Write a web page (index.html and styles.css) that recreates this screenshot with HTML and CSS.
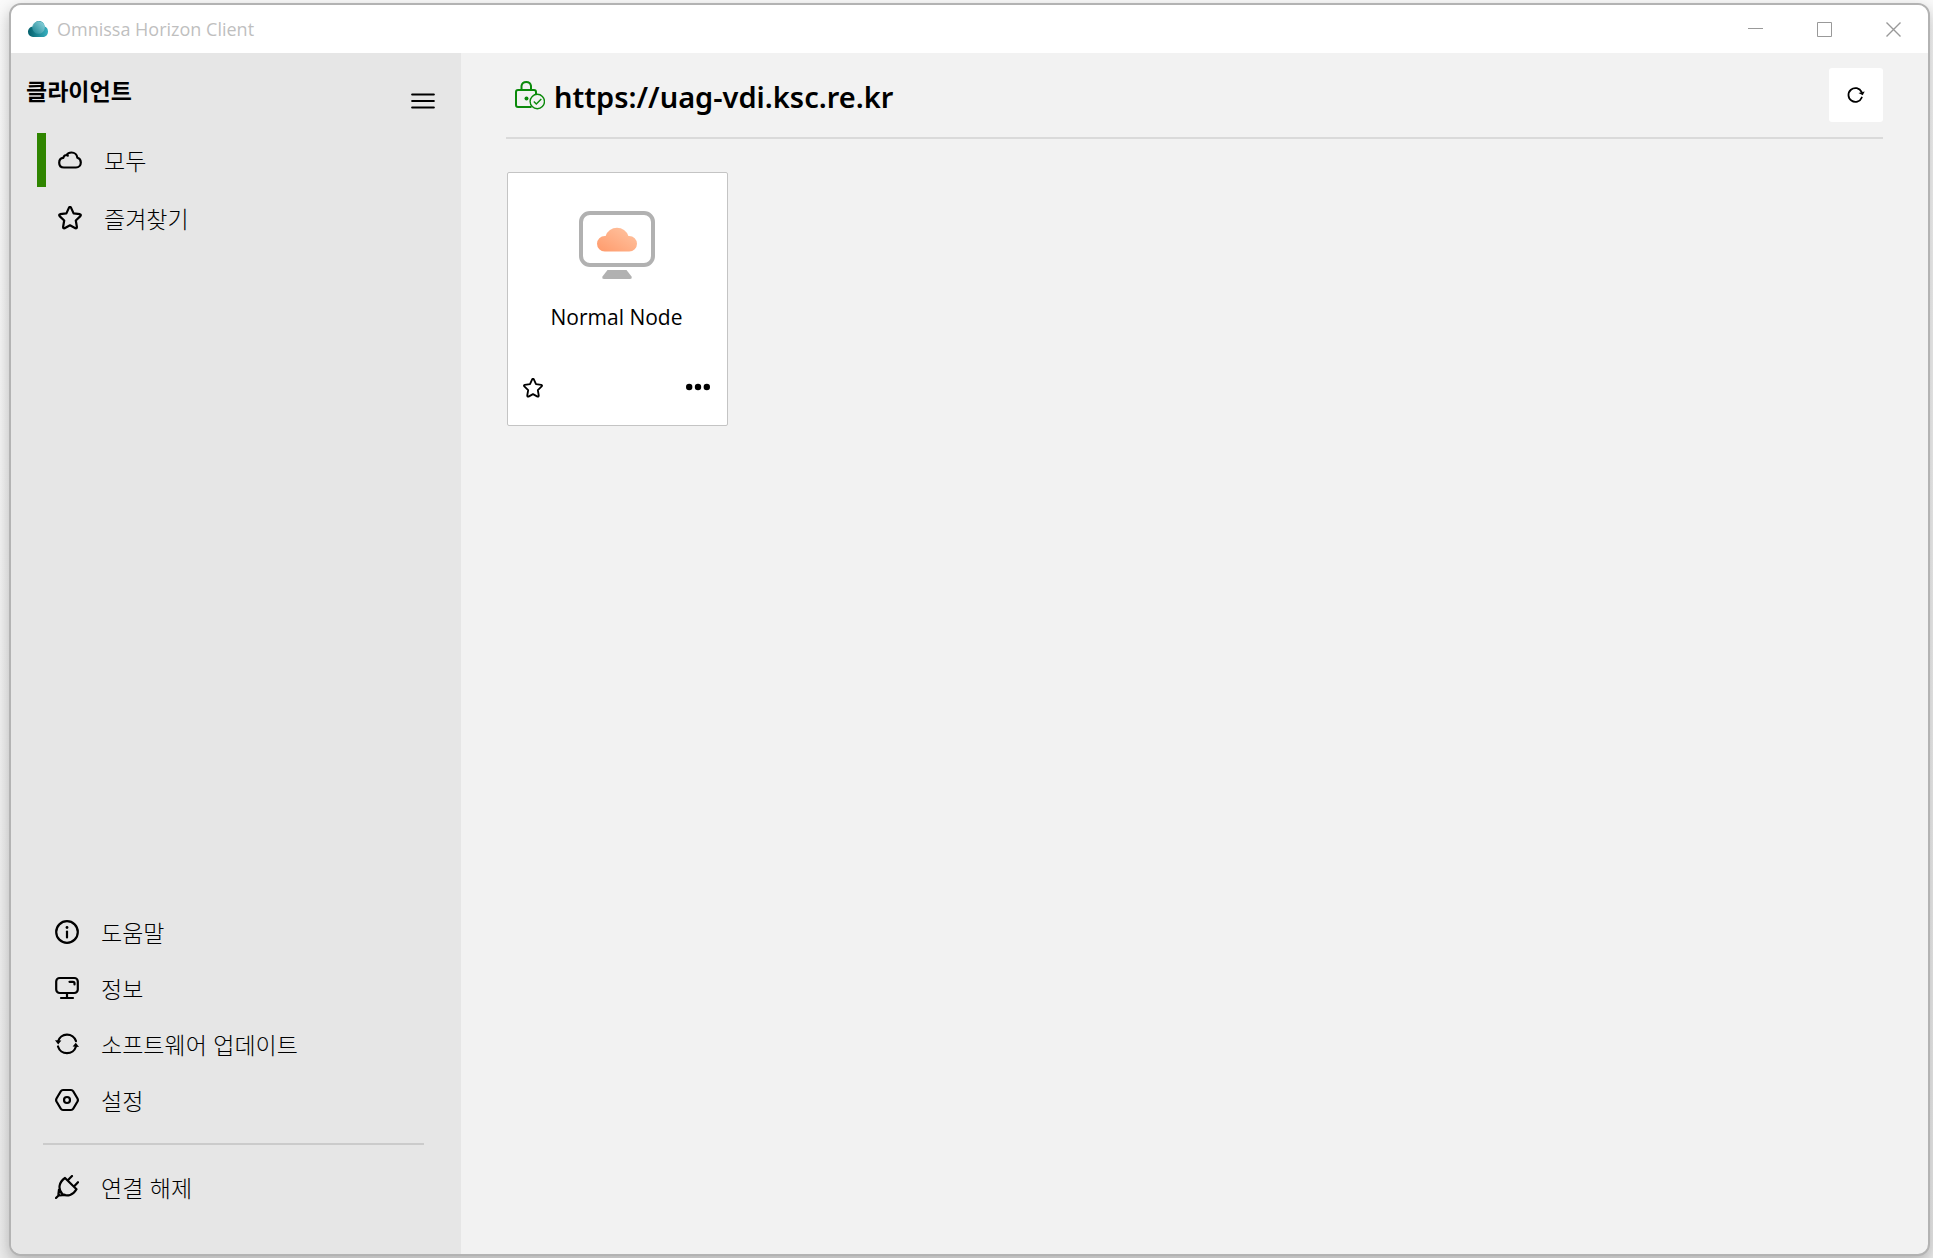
FILE: index.html
```html
<!DOCTYPE html>
<html lang="ko">
<head>
<meta charset="utf-8">
<title>Omnissa Horizon Client</title>
<link rel="stylesheet" href="styles.css">
</head>
<body>
<div class="window">
  <header class="titlebar">
    <svg class="app-logo" width="20" height="16" viewBox="0 0 20 16" aria-hidden="true">
      <defs>
        <linearGradient id="logo-base" x1="0" y1="0" x2="1" y2="0"><stop offset="0" stop-color="#04606c"/><stop offset="1" stop-color="#38b0c0"/></linearGradient>
        <linearGradient id="logo-top" x1="1" y1="0" x2="0" y2="1"><stop offset="0" stop-color="#a6e2ea"/><stop offset="1" stop-color="#1c8795"/></linearGradient>
      </defs>
      <path fill="url(#logo-base)" d="M5 16a5 5 0 0 1-5-5c0-3 2-5.300 5-5.600C6 2 8 0 11 0c3.500 0 5.500 2.500 5.700 5.500C18.800 6.200 20 8 20 10.500c0 3-2 5.500-5 5.500z"/>
      <circle cx="10.500" cy="6.500" r="6.300" fill="url(#logo-top)" opacity=".85"/>
    </svg>
    <span class="app-name">Omnissa Horizon Client</span>
    <div class="window-controls">
      <button type="button" aria-label="최소화"><svg width="15" height="15" viewBox="0 0 15 15"><path d="M0 6.500h15"/></svg></button>
      <button type="button" aria-label="최대화"><svg width="15" height="15" viewBox="0 0 15 15"><path d="M.5.500h14v14H.5z"/></svg></button>
      <button type="button" aria-label="닫기"><svg width="15" height="15" viewBox="0 0 15 15"><path stroke-width="1.400" d="M.5.500l14 14M14.500.500l-14 14"/></svg></button>
    </div>
  </header>
  <div class="content">
    <aside class="sidebar">
      <div class="sidebar-head">
        <h2>클라이언트</h2>
        <button type="button" class="menu-button" aria-label="메뉴">
          <svg class="icon" width="24" height="24" viewBox="0 0 24 24"><path d="M1.200 5.500h21.600M1.200 12h21.600M1.200 18.500h21.600"/></svg>
        </button>
      </div>
      <nav class="nav-top">
        <a href="#all" class="nav-item active">
          <svg class="icon" width="24" height="24" viewBox="0 0 24 24"><path d="M6 19.500c-3 0-4.800-2-4.800-4.800 0-2.600 1.700-4.600 4.100-4.800.3-1.700 1.700-2.900 3.300-2.900C9.600 5.300 11.500 4.500 13.500 4.500c3.200 0 5.600 2.300 5.900 5.300 2.100.6 3.400 2.500 3.400 4.700 0 2.900-2 5-4.800 5zM8.600 7c.5.100.8.300 1.200.6"/></svg>
          <span>모두</span>
        </a>
        <a href="#favorites" class="nav-item">
          <svg class="icon" width="24" height="24" viewBox="0 0 24 24"><path d="M11 1.600q1-1.300 2 0l2.600 5.800 6.300.8q1.600.500.5 1.900l-4.600 4.400 1.100 6.500q0 1.700-1.500 1.300L12 19.300l-5.400 3q-1.500.400-1.500-1.300l1.100-6.500-4.600-4.400q-1.100-1.400.5-1.900l6.300-.8z"/></svg>
          <span>즐겨찾기</span>
        </a>
      </nav>
      <nav class="nav-bottom">
        <a href="#help" class="nav-item">
          <svg class="icon" width="24" height="24" viewBox="0 0 24 24"><circle cx="12" cy="12" r="10.800"/><path d="M12 11.500v6"/><circle class="dot" cx="12" cy="7.500" r="1.400"/></svg>
          <span>도움말</span>
        </a>
        <a href="#about" class="nav-item">
          <svg class="icon" width="24" height="24" viewBox="0 0 24 24"><rect x="1.200" y="2" width="21.600" height="15" rx="3.500"/><path d="M12 17v4.500M6 22h12M14.500 5.800h3.500q1.500 0 1.500 1.500V8.500"/></svg>
          <span>정보</span>
        </a>
        <a href="#update" class="nav-item">
          <svg class="icon" width="24" height="24" viewBox="0 0 24 24"><path d="M3 9.500A9.400 9.400 0 0 1 21 9.200M21 14.500A9.400 9.400 0 0 1 3 14.500"/><path class="dot" d="M0 8.200l6.400.4-3.200 3.800zM24 15l-6.400-.4 3.200-3.800z"/></svg>
          <span>소프트웨어 업데이트</span>
        </a>
        <a href="#settings" class="nav-item">
          <svg class="icon" width="24" height="24" viewBox="0 0 24 24"><path d="M8 2h8q1.500 0 2.200 1.200l4.300 7.300q.8 1.500 0 3l-4.300 7.300Q17.500 22 16 22H8q-1.500 0-2.200-1.200L1.500 13.500q-.8-1.500 0-3L5.800 3.200Q6.500 2 8 2z"/><circle cx="12" cy="12" r="3"/></svg>
          <span>설정</span>
        </a>
        <hr>
        <a href="#disconnect" class="nav-item">
          <svg class="icon" width="24" height="24" viewBox="0 0 24 24"><path d="M10 3L21.500 14.200C18 20 12.500 22 7.500 19.200 2.500 14 4 7 10 3zM12.800 5.200L17 1M19.200 11.200L23 7.200M1 23l3.300-3.300M4 14.500l-.6 5q.1 1 1.200 1l5.400-.7M5.500 17l2 2.200"/></svg>
          <span>연결 해제</span>
        </a>
      </nav>
    </aside>
    <main class="main">
      <div class="server-bar">
        <svg class="lock" width="30" height="30" viewBox="0 0 30 30" aria-hidden="true">
          <path d="M16.500 27H3q-2 0-2-2V12q0-2 2-2h16q2 0 2 2v2M6.500 10V6a4.800 4.800 0 0 1 9.500 0v4"/>
          <circle class="lock-dot" cx="11.500" cy="18.500" r="2"/>
          <circle class="thin" cx="22.300" cy="21.500" r="7.200"/><path class="thin" d="M18.800 21.500l2.500 2.500 5-5"/>
        </svg>
        <h1>https://uag-vdi.ksc.re.kr</h1>
        <button type="button" class="refresh" aria-label="새로 고침">
          <svg class="icon" width="18" height="18" viewBox="0 0 18 18"><path d="M14.800 11.500A6.900 6.900 0 1 1 14.600 6"/><path class="dot" d="M11.500 7l6.200-1.500-2 3.800z"/></svg>
        </button>
      </div>
      <div class="desktops">
        <article class="card">
          <svg class="monitor" width="76" height="68" viewBox="0 0 76 68" aria-hidden="true">
            <defs><linearGradient id="peach" x1="0" y1="1" x2="1" y2="0"><stop offset="0" stop-color="#ff9a6b"/><stop offset="1" stop-color="#ffc6a4"/></linearGradient></defs>
            <rect x="2" y="2" width="72" height="52" rx="9" fill="none" stroke="#b1b1b1" stroke-width="4"/>
            <path fill="#b1b1b1" d="M28.500 59h19L52.500 65.500q.8 2.500-1.500 2.500H25q-2.300 0-1.500-2.500z"/>
            <path fill="url(#peach)" d="M25.800 40.500a7.800 7.800 0 0 1 0-15.600h.8a12 12 0 0 1 22.800 0h.8a7.800 7.800 0 0 1 0 15.600z"/>
          </svg>
          <h3>Normal Node</h3>
          <div class="card-actions">
            <button type="button" aria-label="즐겨찾기에 추가">
              <svg class="icon" width="20" height="20" viewBox="0 0 24 24"><path d="M11 1.600q1-1.300 2 0l2.600 5.800 6.300.8q1.600.500.5 1.900l-4.600 4.400 1.100 6.500q0 1.700-1.500 1.300L12 19.300l-5.400 3q-1.500.400-1.500-1.300l1.100-6.500-4.600-4.400q-1.100-1.400.5-1.900l6.300-.8z"/></svg>
            </button>
            <button type="button" aria-label="더 보기">
              <svg class="icon" width="24" height="20" viewBox="0 0 24 20"><g class="dot"><circle cx="3.200" cy="9" r="3.200"/><circle cx="12" cy="9" r="3.200"/><circle cx="20.800" cy="9" r="3.200"/></g></svg>
            </button>
          </div>
        </article>
      </div>
    </main>
  </div>
</div>
</body>
</html>
```
FILE: styles.css
```css
* { box-sizing: border-box; }

body {
  margin: 0;
  min-height: 100vh;
  padding: 3px 3px 2px 9px;
  display: flex;
  overflow: hidden;
  background: linear-gradient(#fafafa, #ececec);
  color: #000;
  font-family: "Noto Sans", "Noto Sans CJK KR", sans-serif;
}

button {
  display: flex;
  align-items: center;
  justify-content: center;
  padding: 0;
  border: 0;
  background: none;
  color: inherit;
}

h1, h2, h3 { margin: 0; }

.window {
  flex: 1;
  display: flex;
  flex-direction: column;
  border: 2px solid #b3b3b3;
  border-radius: 12px;
  overflow: hidden;
  background: #f2f2f2;
  box-shadow: 0 6px 16px rgba(0, 0, 0, .25);
}

.titlebar {
  display: flex;
  align-items: center;
  height: 48px;
  padding-left: 17px;
  gap: 9px;
  background: #fff;
}

.app-name {
  font-family: "Open Sans", sans-serif;
  font-size: 18px;
  line-height: 24px;
  color: #bfbfbf;
}

.window-controls {
  display: flex;
  margin-left: auto;
  align-self: stretch;
}

.window-controls button { width: 69px; }

.window-controls svg {
  fill: none;
  stroke: #999;
}

.content {
  flex: 1;
  display: flex;
}

.icon {
  flex: none;
  fill: none;
  stroke: #000;
  stroke-width: 2.2;
  stroke-linecap: round;
  stroke-linejoin: round;
}

.icon .dot {
  fill: #000;
  stroke: none;
}

.sidebar {
  flex: none;
  width: 450px;
  display: flex;
  flex-direction: column;
  justify-content: space-between;
  background: #e6e6e6;
  font-family: "Noto Sans CJK KR", sans-serif;
}

.sidebar-head {
  display: flex;
  justify-content: space-between;
  height: 80px;
  padding: 22px 26px 0 15px;
}

.sidebar-head h2 {
  font-size: 23px;
  line-height: 30px;
}

.menu-button {
  width: 24px;
  height: 52px;
}

.nav-top {
  flex: 1;
  display: flex;
  flex-direction: column;
  gap: 4px;
  padding-left: 26px;
}

.nav-item {
  display: flex;
  align-items: center;
  gap: 22px;
  color: #000;
  font-size: 23px;
  font-weight: 300;
  text-decoration: none;
}

.nav-top .nav-item {
  height: 54px;
  padding-left: 12px;
  border-left: 9px solid transparent;
}

.nav-top .active { border-left-color: #2f8500; }

.nav-bottom { padding: 0 37px 39px 32px; }

.nav-bottom .nav-item {
  height: 56px;
  padding-left: 12px;
}

.nav-bottom hr {
  height: 2px;
  margin: 15px 0 14px;
  border: 0;
  background: #cbcbcb;
}

.main {
  flex: 1;
  padding: 15px 45px;
}

.server-bar {
  display: flex;
  height: 71px;
  padding-left: 9px;
  border-bottom: 2px solid #dadada;
}

.lock {
  margin-top: 12px;
  fill: none;
  stroke: #0b8a0b;
  stroke-width: 2;
}

.lock .thin { stroke-width: 1.4; fill: #f2f2f2; }
.lock .lock-dot { fill: #0b8a0b; stroke: none; }

.server-bar h1 {
  margin-left: 9px;
  font-size: 29px;
  font-weight: 600;
  line-height: 58px;
}

.refresh {
  width: 54px;
  height: 54px;
  margin-left: auto;
  border-radius: 3px;
  background: #fff;
}

.refresh .icon { stroke-width: 1.8; }

.desktops {
  display: flex;
  flex-wrap: wrap;
  gap: 24px;
  padding: 33px 1px 0;
}

.card {
  width: 221px;
  height: 254px;
  display: flex;
  flex-direction: column;
  align-items: center;
  padding: 38px 17px 27px 15px;
  border: 1px solid #c4c4c4;
  border-radius: 2px;
  background: #fff;
}

.card h3 {
  margin-top: 23px;
  font-family: "Open Sans", sans-serif;
  font-size: 21px;
  font-weight: 400;
  line-height: 30px;
}

.card-actions {
  align-self: stretch;
  display: flex;
  justify-content: space-between;
  margin-top: auto;
}
```
